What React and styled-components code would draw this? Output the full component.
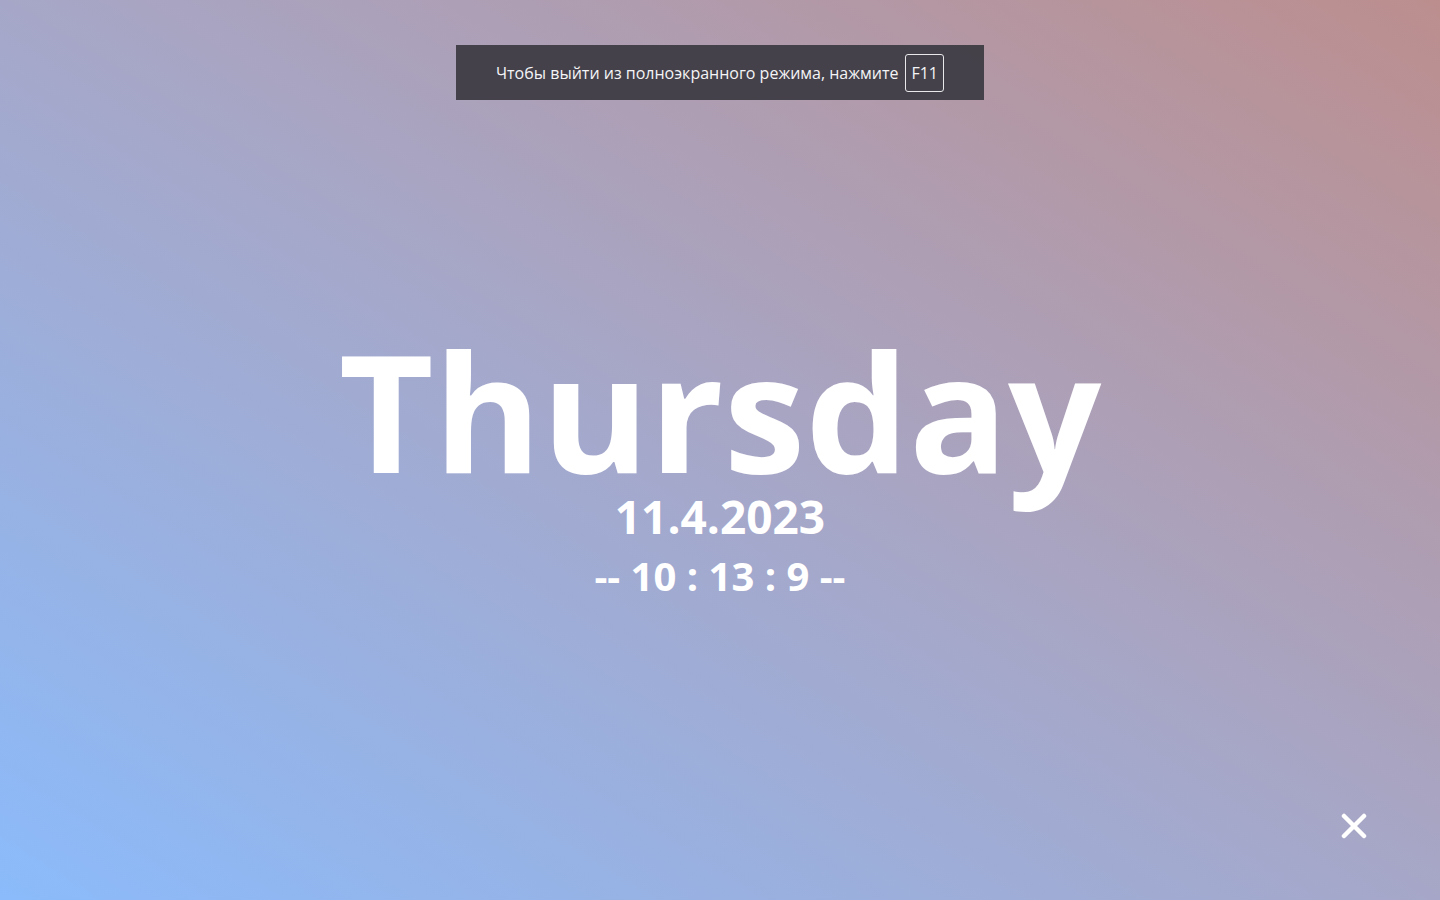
import React from "react";
import styled, { createGlobalStyle } from "styled-components";

const GlobalStyle = createGlobalStyle`
  html, body {
    margin: 0;
    padding: 0;
    height: 100%;
  }
  body {
    font-family: "Open Sans", "Noto Sans", sans-serif;
  }
`;

/* ================= styled-components ================= */
const Screen = styled.main`
  position: relative;
  width: 100%;
  height: 100vh;
  overflow: hidden;
  background: linear-gradient(to top right, #8bbbfb 0%, #a6a7c8 50%, #bc8e8e 100%);
  display: flex;
  flex-direction: column;
  align-items: center;
  justify-content: center;
  color: #ffffff;
  font-family: "Open Sans", sans-serif;
  font-weight: 700;
`;

const Clock = styled.div`
  display: flex;
  flex-direction: column;
  align-items: center;
  margin-top: 23px;
`;

const Day = styled.h1`
  margin: 0;
  font-size: 164px;
  line-height: 1;
  font-weight: 700;
`;

const DateLine = styled.div`
  font-size: 46px;
  line-height: 1;
  margin-top: 1px;
`;

const TimeLine = styled.div`
  font-size: 40px;
  line-height: 1;
  margin-top: 17px;
`;

const Notice = styled.div`
  position: absolute;
  top: 45px;
  left: 50%;
  transform: translateX(-50%);
  width: 528px;
  height: 55px;
  box-sizing: border-box;
  background: rgba(62, 60, 68, 0.95);
  display: flex;
  align-items: center;
  justify-content: center;
  gap: 7px;
  font-size: 16px;
  font-weight: 400;
  color: #f4f4f6;
`;

const Key = styled.span`
  display: inline-flex;
  align-items: center;
  justify-content: center;
  height: 38px;
  padding: 0 5px;
  border: 1px solid #e8e8ea;
  border-radius: 3px;
  box-sizing: border-box;
`;

const CloseButton = styled.button`
  position: absolute;
  right: 72px;
  bottom: 60px;
  width: 28px;
  height: 28px;
  padding: 0;
  border: none;
  background: transparent;
  cursor: pointer;
  display: flex;
  align-items: center;
  justify-content: center;
`;

/* ================= App ================= */
const App = () => {
  return (
    <>
      <GlobalStyle />
      <Screen>
        <Notice>
          Чтобы выйти из полноэкранного режима, нажмите <Key>F11</Key>
        </Notice>

        <Clock>
          <Day>Thursday</Day>
          <DateLine>11.4.2023</DateLine>
          <TimeLine>-- 10 : 13 : 9 --</TimeLine>
        </Clock>

        <CloseButton aria-label="close">
          <svg width="26" height="26" viewBox="0 0 26 26">
            <path
              d="M3 3 L23 23 M23 3 L3 23"
              stroke="#ffffff"
              strokeWidth="4.5"
              strokeLinecap="round"
            />
          </svg>
        </CloseButton>
      </Screen>
    </>
  );
};

export default App;
